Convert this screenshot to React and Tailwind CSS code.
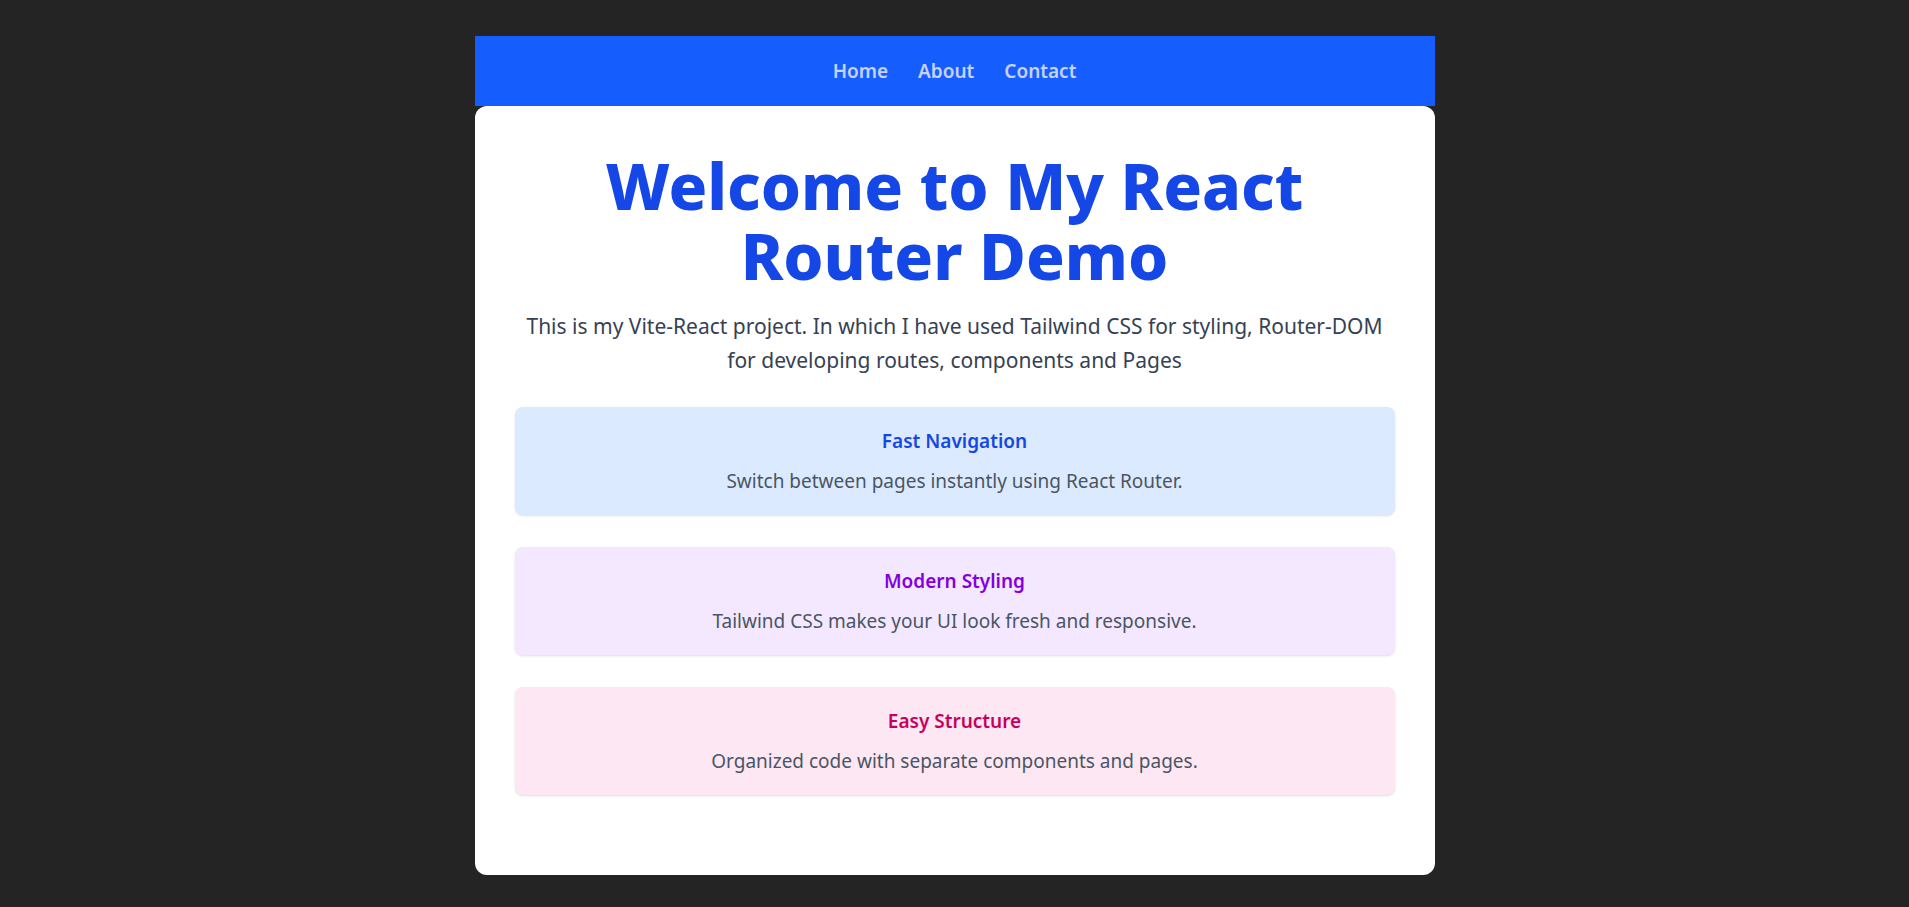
const FEATURES = [
  {
    title: "Fast Navigation",
    desc: "Switch between pages instantly using React Router.",
    box: "bg-blue-100",
    head: "text-blue-700",
  },
  {
    title: "Modern Styling",
    desc: "Tailwind CSS makes your UI look fresh and responsive.",
    box: "bg-purple-100",
    head: "text-purple-700",
  },
  {
    title: "Easy Structure",
    desc: "Organized code with separate components and pages.",
    box: "bg-pink-100",
    head: "text-pink-700",
  },
];

function Navbar() {
  return (
    <nav className="bg-blue-600 h-[70px] flex items-center justify-center gap-[30px]">
      {["Home", "About", "Contact"].map((item) => (
        <a key={item} href="#" className="text-[19px] font-semibold text-indigo-200 hover:text-white">
          {item}
        </a>
      ))}
    </nav>
  );
}

export default function App() {
  return (
    <div
      className="min-h-screen bg-[#242424] pt-9 pb-8"
      style={{ fontFamily: '"Noto Sans", "Open Sans", sans-serif' }}
    >
      <div className="w-[960px] mx-auto">
        <Navbar />
        <main className="bg-white rounded-xl px-10 pt-[45px] pb-20 text-center">
          <h1 className="text-[64px] leading-[70px] font-extrabold text-blue-700 mb-[18px]">
            Welcome to My React Router Demo
          </h1>
          <p className="text-[21px] leading-[34px] text-gray-700 mb-[30px]">
            This is my Vite-React project. In which I have used Tailwind CSS for styling,
            Router-DOM for developing routes, components and Pages
          </p>
          <div className="flex flex-col gap-8">
            {FEATURES.map((f) => (
              <div key={f.title} className={`${f.box} rounded-lg shadow-sm px-6 py-5`}>
                <h2 className={`text-[19px] leading-7 font-semibold ${f.head} mb-3`}>{f.title}</h2>
                <p className="text-[19px] leading-7 text-gray-600">{f.desc}</p>
              </div>
            ))}
          </div>
        </main>
      </div>
    </div>
  );
}
